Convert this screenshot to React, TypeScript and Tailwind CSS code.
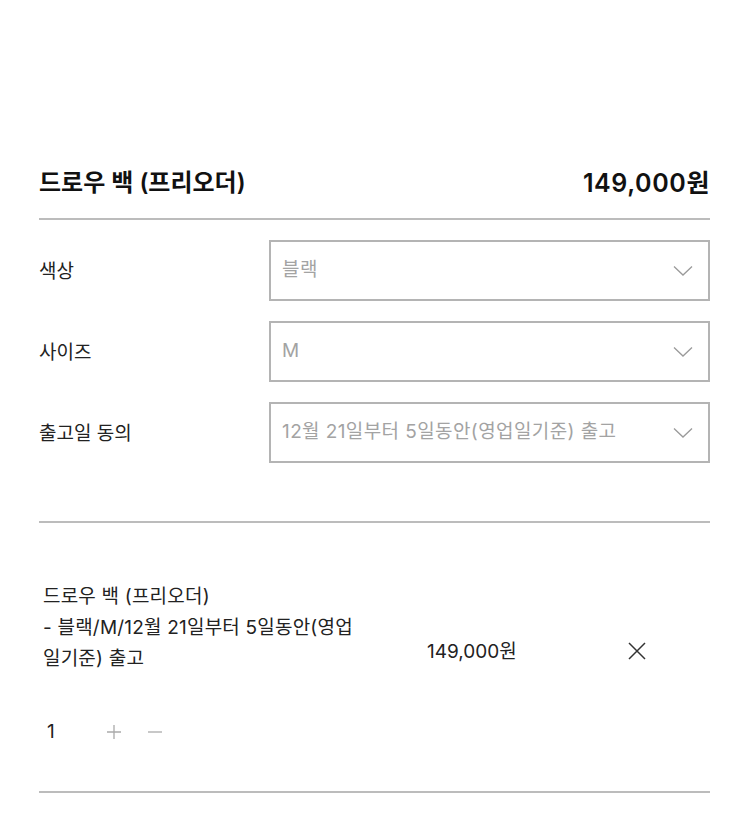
const font = { fontFamily: 'Inter, "Noto Sans CJK KR", "Noto Sans", sans-serif' };

const options = [
  { label: "색상", value: "블랙" },
  { label: "사이즈", value: "M" },
  { label: "출고일 동의", value: "12월 21일부터 5일동안(영업일기준) 출고" },
];

function Chevron() {
  return (
    <svg width="20" height="12" viewBox="0 0 20 12" fill="none" className="shrink-0">
      <path d="M1 1.5L10 10L19 1.5" stroke="#9a9a9a" strokeWidth="1.3" />
    </svg>
  );
}

function SelectRow({ label, value }: { label: string; value: string }) {
  return (
    <div className="flex items-center">
      <div className="w-[230px] shrink-0 pt-[3px] text-[19px] text-[#222]">{label}</div>
      <div className="flex h-[61px] flex-1 items-center justify-between border-2 border-[#b4b4b4] pl-[11px] pr-[15px]">
        <span className="text-[19px] tracking-[0.4px] text-[#a3a3a3]">{value}</span>
        <Chevron />
      </div>
    </div>
  );
}

export default function App() {
  return (
    <div className="min-h-[820px] bg-white px-[39px] pr-[40px]" style={font}>
      <div className="flex items-center justify-between border-b-2 border-[#bcbcbc] pb-[19px] pt-[167px] leading-[32px]">
        <h1 className="text-[24px] font-semibold text-[#111]">드로우 백 (프리오더)</h1>
        <div className="text-[25px] font-semibold tracking-[0.6px] text-[#111]">149,000원</div>
      </div>

      <div className="mt-[20px] flex flex-col gap-[20px] border-b-2 border-[#bcbcbc] pb-[58px]">
        {options.map((o) => (
          <SelectRow key={o.label} label={o.label} value={o.value} />
        ))}
      </div>

      <div className="border-b-2 border-[#bcbcbc] pb-[44px] pl-[4px] pt-[58px]">
        <div className="flex items-end">
          <div className="w-[384px] shrink-0 text-[19px] leading-[31px] tracking-[0.2px] text-[#222]">
            <div>드로우 백 (프리오더)</div>
            <div>- 블랙/M/12월 21일부터 5일동안(영업</div>
            <div>일기준) 출고</div>
          </div>
          <div className="w-[200px] shrink-0 pb-[7px] text-[19px] leading-[31px] text-[#222]">149,000원</div>
          <button className="mb-[13px] flex h-[20px] w-[20px] items-center justify-center">
            <svg width="18" height="18" viewBox="0 0 18 18" fill="none">
              <path d="M1 1L17 17M17 1L1 17" stroke="#333" strokeWidth="1.5" />
            </svg>
          </button>
        </div>

        <div className="mt-[42px] flex items-center text-[19px] leading-[31px]">
          <span className="w-[63px] pl-[4px] text-[#222]">1</span>
          <svg width="16" height="16" viewBox="0 0 16 16" fill="none">
            <path d="M8 1V15M1 8H15" stroke="#aaa" strokeWidth="1.3" />
          </svg>
          <svg width="16" height="16" viewBox="0 0 16 16" fill="none" className="ml-[25px]">
            <path d="M1 8H15" stroke="#aaa" strokeWidth="1.3" />
          </svg>
        </div>
      </div>
    </div>
  );
}
